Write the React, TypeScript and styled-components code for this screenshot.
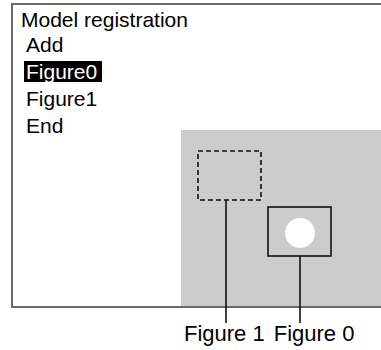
import styled, { createGlobalStyle } from 'styled-components';

const GlobalStyle = createGlobalStyle`
  html, body {
    margin: 0;
    padding: 0;
    background: #fff;
  }
  body {
    font-family: "Liberation Sans", Arial, sans-serif;
    color: #000;
    overflow: hidden;
  }
`;

const menuItems = ['Add', 'Figure0', 'Figure1', 'End'];
const selected = 'Figure0';

export default function App() {
  return (
    <>
      <GlobalStyle />
      <Page>
        <Frame>
          <Menu>
            <MenuTitle>Model registration</MenuTitle>
            <ItemList>
              {menuItems.map((item) => (
                <MenuItem key={item} $active={item === selected}>{item}</MenuItem>
              ))}
            </ItemList>
          </Menu>
          <Scene>
            <SceneDrawing width="200" height="176" viewBox="0 0 200 176">
              <rect x="17" y="21" width="63" height="49" fill="none" stroke="#111" strokeWidth="1.6" strokeDasharray="5 3" />
              <rect x="87" y="77" width="63" height="49" fill="none" stroke="#111" strokeWidth="1.6" />
              <circle cx="119" cy="103" r="15" fill="#fff" />
              <line x1="45" y1="70" x2="45" y2="193" stroke="#111" strokeWidth="1.6" />
              <line x1="119" y1="126" x2="119" y2="193" stroke="#111" strokeWidth="1.6" />
            </SceneDrawing>
          </Scene>
        </Frame>
        <Labels>
          <Label>Figure 1</Label>
          <Label>Figure 0</Label>
        </Labels>
      </Page>
    </>
  );
}

const Page = styled.div`
  width: 381px;
  height: 350px;
  overflow: hidden;
  padding: 3px 0 0 11px;
  box-sizing: border-box;
`;

const Frame = styled.div`
  width: 400px;
  height: 305px;
  box-sizing: border-box;
  border: 2px solid #6a6a6a;
  display: grid;
  grid-template-columns: 168px 1fr;
  grid-template-rows: 125px 176px;
`;

const Menu = styled.div`
  grid-row: 1 / 3;
  grid-column: 1 / 3;
  display: flex;
  flex-direction: column;
  padding-top: 4px;
  font-size: 21px;
  z-index: 1;
`;

const MenuTitle = styled.div`
  height: 21px;
  line-height: 21px;
  margin-left: 8px;
  white-space: nowrap;
`;

const ItemList = styled.div`
  display: flex;
  flex-direction: column;
  align-items: flex-start;
  gap: 6px;
  margin-top: 4px;
  margin-left: 11px;
`;

const MenuItem = styled.div<{ $active?: boolean }>`
  height: 21px;
  line-height: 21px;
  padding: 0 5px 0 2px;
  background: ${(p) => (p.$active ? '#000' : 'transparent')};
  color: ${(p) => (p.$active ? '#fff' : '#000')};
`;

const Scene = styled.div`
  grid-row: 2;
  grid-column: 2;
  position: relative;
  background: #cccccc;
`;

const SceneDrawing = styled.svg`
  position: absolute;
  left: 0;
  top: 0;
  overflow: visible;
  z-index: 2;
`;

const Labels = styled.div`
  display: flex;
  gap: 9px;
  margin-top: 13px;
  margin-left: 173px;
`;

const Label = styled.div`
  font-size: 22px;
  line-height: 25px;
  white-space: nowrap;
`;
